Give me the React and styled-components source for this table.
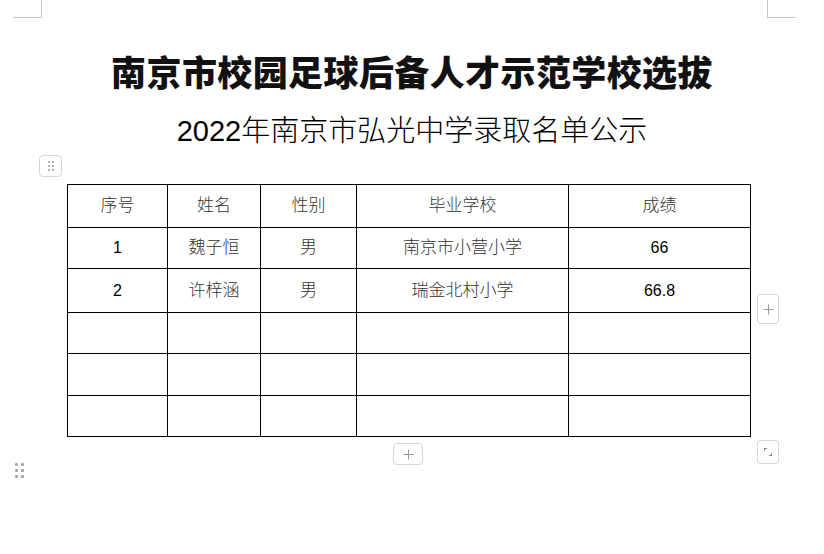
import React from 'react'
import styled, { createGlobalStyle } from 'styled-components'

const GlobalStyle = createGlobalStyle`
body{
    margin:0;
    background:#fff;
    font-family:"Liberation Sans","Noto Sans CJK SC",sans-serif;
}
`

const Page = styled.div`
width:824px;
height:554px;
display:flex;
flex-direction:column;
overflow:hidden;
`

const CornerBar = styled.div`
display:flex;
justify-content:space-between;
padding:0 28px 0 13px;
`

const Corner = styled.div`
width:28px;
height:17px;
border-bottom:1px solid #c8c8c8;
border-right:${props => props.right ? 'none' : '1px solid #c8c8c8'};
border-left:${props => props.right ? '1px solid #c8c8c8' : 'none'};
`

const Title = styled.h1`
margin:33px 0 0 0;
text-align:center;
font-family:"Noto Sans CJK SC",serif;
font-weight:900;
font-size:35px;
line-height:40px;
letter-spacing:0.4px;
color:#111;
`

const SubTitle = styled.h2`
margin:19px 0 0 0;
text-align:center;
font-family:"Liberation Sans","Noto Sans CJK SC",sans-serif;
font-weight:400;
font-size:29px;
line-height:36px;
color:#000;
span{
    font-family:"Noto Sans CJK SC",sans-serif;
    font-weight:300;
}
`

const ToolBox = styled.div`
box-sizing:border-box;
width:${props => props.w || 22}px;
height:${props => props.h || 22}px;
border:1px solid #d6d6d6;
border-radius:4px;
background:#fff;
display:flex;
align-items:center;
justify-content:center;
`

const HandleRow = styled.div`
margin:6px 0 7px 39px;
`

const DotGrid = styled.div`
display:grid;
grid-template-columns:repeat(2,${props => props.big ? 3 : 2}px);
gap:${props => props.big ? '3px 3px' : '2px 2px'};
i{
    width:${props => props.big ? 3 : 2}px;
    height:${props => props.big ? 3 : 2}px;
    background:${props => props.big ? '#a6a6a6' : '#9a9a9a'};
    border-radius:1px;
}
`

const TableWrap = styled.div`
position:relative;
margin-left:67px;
width:684px;
`

const Table = styled.table`
border-collapse:collapse;
table-layout:fixed;
width:684px;
td{
    border:1px solid #000;
    text-align:center;
    padding:0;
    font-size:16px;
    line-height:20px;
    color:#000;
}
`

const Row = styled.tr`
height:${props => props.h}px;
`

const CnCell = styled.td`
&&{
    font-family:"Noto Sans CJK SC",serif;
    font-weight:300;
    font-size:17px;
    color:#333;
    padding-bottom:4px;
}
`

const NumCell = styled.td`
&&{
    font-family:"Liberation Sans",Arial,sans-serif;
    font-size:16px;
    color:#000;
}
`

const Floating = styled.div`
position:absolute;
left:${props => props.x}px;
top:${props => props.y}px;
`

const Plus = () => (
    <svg width='11' height='11' viewBox='0 0 11 11'>
        <path d='M5.5 0.5v10M0.5 5.5h10' stroke='#9a9a9a' strokeWidth='1' />
    </svg>
)

const Resize = () => (
    <svg width='10' height='10' viewBox='0 0 10 10'>
        <path d='M1 1h3v1H2v2H1z' fill='#8a8a8a' />
        <path d='M9 9H6V8h2V6h1z' fill='#8a8a8a' />
    </svg>
)

const Dots = ({ big }) => (
    <DotGrid big={big}>
        {[0, 1, 2, 3, 4, 5].map(i => <i key={i} />)}
    </DotGrid>
)

const columns = [100, 93, 96, 212, 182]
const rowHeights = [43, 41, 44, 41, 42, 41]

const students = [
    { no: '1', name: '魏子恒', sex: '男', school: '南京市小营小学', score: '66' },
    { no: '2', name: '许梓涵', sex: '男', school: '瑞金北村小学', score: '66.8' },
]

export default function App() {
    const empty = [0, 1, 2].map(i => (
        <Row key={'e' + i} h={rowHeights[3 + i]}>
            {columns.map((c, j) => <td key={j}></td>)}
        </Row>
    ))
    return (
        <Page>
            <GlobalStyle />
            <CornerBar>
                <Corner />
                <Corner right />
            </CornerBar>
            <Title>南京市校园足球后备人才示范学校选拔</Title>
            <SubTitle>2022<span>年南京市弘光中学录取名单公示</span></SubTitle>
            <HandleRow>
                <ToolBox w={23} h={22}><Dots /></ToolBox>
            </HandleRow>
            <TableWrap>
                <Table>
                    <colgroup>
                        {columns.map((w, i) => <col key={i} style={{ width: w }} />)}
                    </colgroup>
                    <tbody>
                        <Row h={rowHeights[0]}>
                            <CnCell>序号</CnCell>
                            <CnCell>姓名</CnCell>
                            <CnCell>性别</CnCell>
                            <CnCell>毕业学校</CnCell>
                            <CnCell>成绩</CnCell>
                        </Row>
                        {students.map((s, i) => (
                            <Row key={s.no} h={rowHeights[1 + i]}>
                                <NumCell>{s.no}</NumCell>
                                <CnCell>{s.name}</CnCell>
                                <CnCell>{s.sex}</CnCell>
                                <CnCell>{s.school}</CnCell>
                                <NumCell>{s.score}</NumCell>
                            </Row>
                        ))}
                        {empty}
                    </tbody>
                </Table>
                <Floating x={690} y={110}>
                    <ToolBox w={22} h={30}><Plus /></ToolBox>
                </Floating>
                <Floating x={326} y={259}>
                    <ToolBox w={30} h={22}><Plus /></ToolBox>
                </Floating>
                <Floating x={690} y={256}>
                    <ToolBox w={22} h={24}><Resize /></ToolBox>
                </Floating>
                <Floating x={-52} y={279}>
                    <Dots big />
                </Floating>
            </TableWrap>
        </Page>
    )
}
